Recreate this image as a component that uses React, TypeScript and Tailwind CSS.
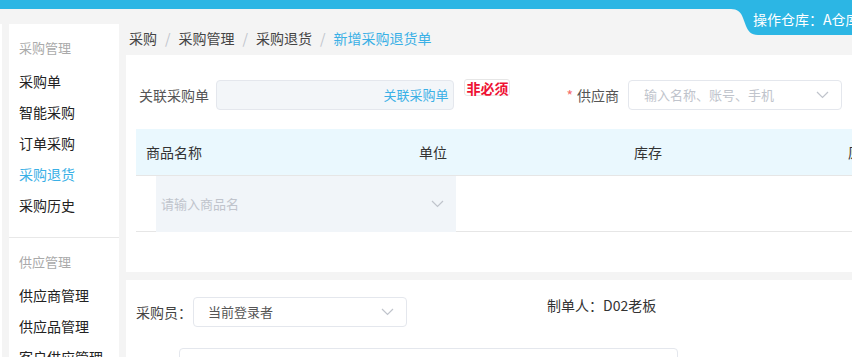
import React from 'react'

const font = { fontFamily: '"Noto Sans CJK SC", "Noto Sans", sans-serif' }

function Chevron({ className = '' }: { className?: string }) {
  return (
    <svg width="13" height="8" viewBox="0 0 13 8" className={className} fill="none">
      <polyline points="1,1 6.5,6.5 12,1" stroke="#c0c4cc" strokeWidth="1.2" />
    </svg>
  )
}

const menus = [
  {
    title: '采购管理',
    items: ['采购单', '智能采购', '订单采购', '采购退货', '采购历史'],
  },
  {
    title: '供应管理',
    items: ['供应商管理', '供应品管理', '客户供应管理'],
  },
]

export default function App() {
  return (
    <div
      className="relative w-[852px] h-[357px] overflow-hidden bg-[#f4f4f4] text-[14px] text-[#333]"
      style={font}
    >
      {/* Top bar */}
      <div className="h-[9px] bg-[#2cb6e4]" />
      <div className="absolute right-0 top-0 w-[132px] h-[35px]">
        <svg width="132" height="35" viewBox="0 0 132 35" className="absolute inset-0">
          <path
            d="M0 0 H132 V35 H38 C31 35 28 31 26 26 L23 18 C21 12 17 9 11 9 H0 Z"
            fill="#2cb6e4"
          />
        </svg>
        <div className="absolute left-[33px] top-[9px] leading-[20px] text-white whitespace-nowrap">
          操作仓库：A仓库
        </div>
      </div>

      <div className="flex mt-[15px] h-[333px]">
        <div className="w-[2px] bg-white shrink-0" />

        {/* Sidebar */}
        <div className="ml-[7px] w-[110px] shrink-0 bg-white">
          {menus.map((m, i) => (
            <div key={m.title} className={i === 0 ? 'pb-[16px] border-b border-[#e8e8e8]' : ''}>
              <div className="mt-[14px] mb-[8px] h-[20px] leading-[20px] pl-[10px] text-[13px] text-[#aaa]">
                {m.title}
              </div>
              {m.items.map((it) => (
                <div
                  key={it}
                  className={`h-[31px] flex items-center pl-[10px] whitespace-nowrap ${
                    it === '采购退货' ? 'text-[#3ab0e6]' : 'text-[#222]'
                  }`}
                >
                  {it}
                </div>
              ))}
            </div>
          ))}
        </div>

        {/* Main */}
        <div className="ml-[7px] flex-1 min-w-0">
          <div className="h-[31px] flex items-center pb-[3px] pl-[3px] whitespace-nowrap">
            <span className="text-[#444]">采购</span>
            <span className="mx-[8px] text-[#c0c4cc]">/</span>
            <span className="text-[#444]">采购管理</span>
            <span className="mx-[8px] text-[#c0c4cc]">/</span>
            <span className="text-[#444]">采购退货</span>
            <span className="mx-[8px] text-[#c0c4cc]">/</span>
            <span className="text-[#3ab0e6]">新增采购退货单</span>
          </div>

          {/* Panel 1 */}
          <div className="bg-white h-[217px] pt-[25px] px-[10px]">
            <div className="flex items-center h-[30px] whitespace-nowrap">
              <div className="w-[80px] pl-[3px] text-[#555]">关联采购单</div>
              <div className="w-[240px] h-[30px] rounded-[4px] border border-[#e4e7ed] bg-[#f3f6f9] flex items-center justify-end pr-[5px] text-[13px] text-[#3ab0e6]">
                关联采购单
              </div>
              <div className="self-start -mt-[1px] ml-[10px] px-[1px] h-[17px] leading-[16px] rounded-[3px] border border-[#e6e6e6] text-[14px] font-bold text-[#ee1133] [text-shadow:0_0_2px_#fff]">
                非必须
              </div>
              <span className="ml-[56px] text-[#f56c6c] mr-[4px]">*</span>
              <span className="text-[#555]">供应商</span>
              <div className="ml-[9px] w-[215px] h-[30px] rounded-[4px] border border-[#e4e7ed] flex items-center pl-[15px] pr-[12px] justify-between text-[#c0c4cc] text-[13px]">
                <span>输入名称、账号、手机</span>
                <Chevron />
              </div>
            </div>

            {/* Table */}
            <div className="mt-[19px] w-[760px]">
              <div className="flex items-center h-[47px] bg-[#eaf8fe] border-b border-[#e6e6e6] whitespace-nowrap text-[#333]">
                <div className="w-[283px] pl-[10px]">商品名称</div>
                <div className="w-[215px]">单位</div>
                <div className="w-[214px]">库存</div>
                <div>原价</div>
              </div>
              <div className="flex h-[56px] border-b border-[#e6e6e6]">
                <div className="w-[20px]" />
                <div className="w-[300px] h-[56px] bg-[#f1f5f9] flex items-center justify-between pl-[5px] pr-[12px] text-[#c0c4cc] text-[13px]">
                  <span>请输入商品名</span>
                  <Chevron />
                </div>
              </div>
            </div>
          </div>

          {/* Panel 2 */}
          <div className="mt-[8px] bg-white h-[100px] pt-[17px] px-[10px]">
            <div className="flex items-start whitespace-nowrap">
              <div className="h-[30px] flex items-center text-[#444]">采购员：</div>
              <div className="ml-[1px] w-[214px] h-[30px] rounded-[4px] border border-[#e4e7ed] flex items-center justify-between pl-[14px] pr-[12px] text-[#555] text-[13px]">
                <span>当前登录者</span>
                <Chevron />
              </div>
              <div className="ml-[140px] mt-[-2px] h-[20px] leading-[20px] text-[#333]">
                制单人：D02老板
              </div>
            </div>
            <div className="mt-[21px] ml-[43px] w-[499px] h-[30px] rounded-[4px] border border-[#e4e7ed]" />
          </div>
        </div>
      </div>
    </div>
  )
}
